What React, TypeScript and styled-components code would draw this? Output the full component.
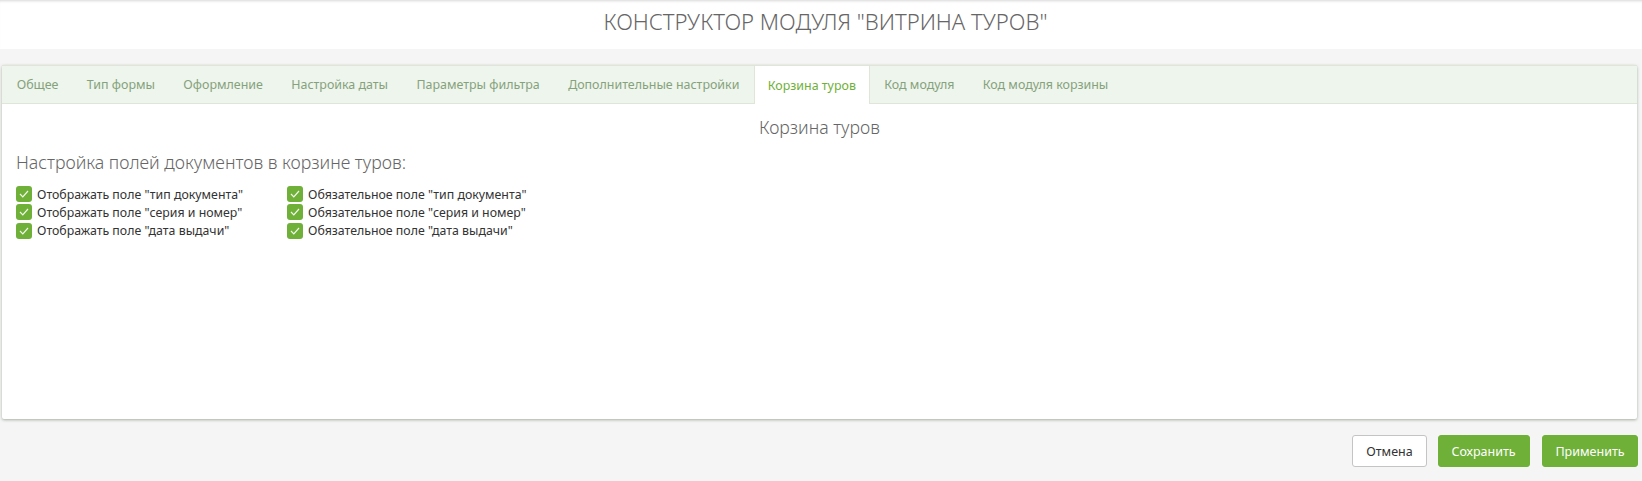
import React from "react";
import styled, { createGlobalStyle } from "styled-components";

const Global = createGlobalStyle`
  html, body { margin: 0; padding: 0; background: #f5f5f5; }
  body { font-family: "Noto Sans", "Open Sans", sans-serif; width: 1642px; height: 481px; overflow: hidden; }
`;

const Page = styled.div`
  display: flex;
  flex-direction: column;
  height: 481px;
`;
const Header = styled.header`
  height: 49px;
  padding: 0 0 7px 9px;
  box-sizing: border-box;
  background: #fff;
  box-shadow: inset 0 3px 3px -2px rgba(0, 0, 0, 0.16);
  display: flex;
  align-items: center;
  justify-content: center;
`;
const Title = styled.h1`
  margin: 0;
  font-size: 22.1px;
  font-weight: 300;
  color: #666;
`;
const Panel = styled.section`
  margin: 16px 5px 0 2px;
  height: 354px;
  background: #fff;
  border-radius: 2px;
  box-shadow: 0 1px 3px rgba(90, 110, 80, 0.5);
  display: flex;
  flex-direction: column;
`;
const TabBar = styled.nav`
  height: 39px;
  display: flex;
  padding-left: 0.5px;
  background: #eef5ec;
  border-bottom: 1px solid #dfe6d8;
  border-top: 1px solid #dfe6d8;
  box-sizing: border-box;
`;
const Tab = styled.div<{ $active?: boolean }>`
  padding: 0 13.2px;
  display: flex;
  align-items: center;
  font-size: 12.45px;
  color: ${(p) => (p.$active ? "#6fb038" : "#85a27c")};
  background: ${(p) => (p.$active ? "#fff" : "transparent")};
  border-left: 1px solid ${(p) => (p.$active ? "#dfe6d8" : "transparent")};
  border-right: 1px solid ${(p) => (p.$active ? "#dfe6d8" : "transparent")};
  margin-bottom: ${(p) => (p.$active ? "-1px" : "0")};
`;
const Body = styled.div`
  padding: 10.5px 14px;
`;
const SectionTitle = styled.h2`
  margin: 0;
  text-align: center;
  font-size: 17.7px;
  font-weight: 300;
  color: #666;
`;
const SubTitle = styled.h3`
  margin: 11.4px 0 11px;
  font-size: 17.75px;
  font-weight: 300;
  color: #666;
`;
const Columns = styled.div`
  display: flex;
  gap: 40px;
`;
const Column = styled.div`
  display: flex;
  flex-direction: column;
  width: 231px;
`;
const CheckRow = styled.label`
  display: flex;
  align-items: center;
  gap: 5px;
  height: 18.4px;
  font-size: 12.35px;
  color: #333;
  white-space: nowrap;
`;
const Box = styled.span`
  width: 16px;
  height: 16px;
  flex: none;
  border-radius: 3px;
  background: #6fb038;
  display: flex;
  align-items: center;
  justify-content: center;
`;
const Footer = styled.footer`
  display: flex;
  justify-content: flex-end;
  gap: 10.5px;
  padding: 16px 4px 0 0;
`;
const Button = styled.button<{ $primary?: boolean }>`
  height: 32px;
  width: ${(p) => (p.$primary ? "92px" : "75px")};
  padding: 0;
  box-sizing: border-box;
  border-radius: 3px;
  font-family: inherit;
  font-size: 12.5px;
  border: 1px solid ${(p) => (p.$primary ? "#6fb038" : "#c4c4c4")};
  background: ${(p) => (p.$primary ? "#6fb038" : "#fff")};
  color: ${(p) => (p.$primary ? "#fff" : "#333")};
`;
const ApplyButton = styled(Button)`
  width: 96px;
  margin-left: 2px;
`;

const Check = () => (
  <Box>
    <svg width="10" height="8" viewBox="0 0 10 8" fill="none">
      <path d="M1 4l2.8 2.8L9 1" stroke="#f2f8ec" strokeWidth="1.2" />
    </svg>
  </Box>
);

const tabs = ["Общее", "Тип формы", "Оформление", "Настройка даты", "Параметры фильтра", "Дополнительные настройки", "Корзина туров", "Код модуля", "Код модуля корзины"];
const fields = ['"тип документа"', '"серия и номер"', '"дата выдачи"'];

export default function App() {
  return (
    <Page>
      <Global />
      <Header><Title>КОНСТРУКТОР МОДУЛЯ "ВИТРИНА ТУРОВ"</Title></Header>
      <Panel>
        <TabBar>
          {tabs.map((t) => <Tab key={t} $active={t === "Корзина туров"}>{t}</Tab>)}
        </TabBar>
        <Body>
          <SectionTitle>Корзина туров</SectionTitle>
          <SubTitle>Настройка полей документов в корзине туров:</SubTitle>
          <Columns>
            <Column>{fields.map((f) => <CheckRow key={f}><Check />Отображать поле {f}</CheckRow>)}</Column>
            <Column>{fields.map((f) => <CheckRow key={f}><Check />Обязательное поле {f}</CheckRow>)}</Column>
          </Columns>
        </Body>
      </Panel>
      <Footer>
        <Button>Отмена</Button>
        <Button $primary>Сохранить</Button>
        <ApplyButton $primary>Применить</ApplyButton>
      </Footer>
    </Page>
  );
}
